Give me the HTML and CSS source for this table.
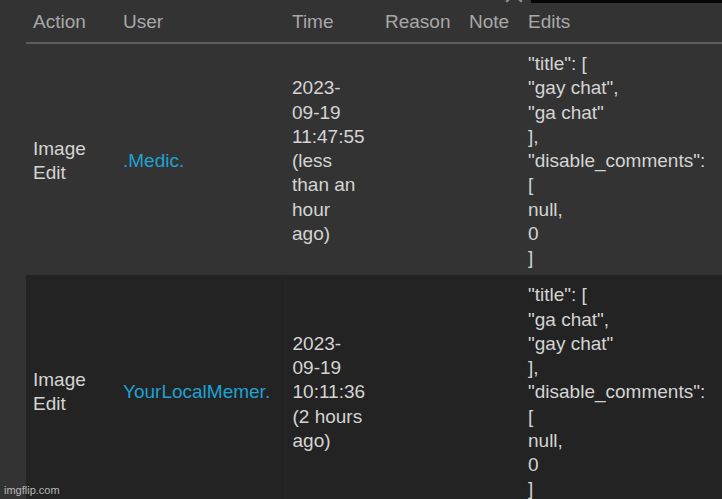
FILE: index.html
```html
<!DOCTYPE html>
<html>
<head>
<meta charset="utf-8">
<link rel="stylesheet" href="styles.css">
</head>
<body>
<div class="page">
  <div class="topbar"></div>
  <svg class="close" width="20" height="20" viewBox="0 0 20 20"><path d="M3 3 L17 17 M17 3 L3 17" stroke="#8a8a8a" stroke-width="2.5" stroke-linecap="round"/></svg>
  <table class="log">
    <colgroup>
      <col class="c-action"><col class="c-user"><col class="c-time"><col class="c-reason"><col class="c-note"><col class="c-edits">
    </colgroup>
    <thead>
      <tr><th>Action</th><th>User</th><th>Time</th><th>Reason</th><th>Note</th><th>Edits</th></tr>
    </thead>
    <tbody>
      <tr class="row-a">
        <td>Image Edit</td>
        <td><a class="user">.Medic.</a></td>
        <td class="time">2023-<br>09-19<br>11:47:55<br>(less<br>than an<br>hour<br>ago)</td>
        <td></td>
        <td></td>
        <td class="edits">"title": [
"gay chat",
"ga chat"
],
"disable_comments":
[
null,
0
]</td>
      </tr>
      <tr class="row-b">
        <td>Image Edit</td>
        <td><a class="user">YourLocalMemer.</a></td>
        <td class="time">2023-<br>09-19<br>10:11:36<br>(2 hours<br>ago)</td>
        <td></td>
        <td></td>
        <td class="edits">"title": [
"ga chat",
"gay chat"
],
"disable_comments":
[
null,
0
]</td>
      </tr>
    </tbody>
  </table>
  <div class="watermark">imgflip.com</div>
</div>
</body>
</html>
```
FILE: styles.css
```css
html, body {
  margin: 0;
  padding: 0;
  background: #333333;
  overflow: hidden;
}
.page {
  position: relative;
  width: 722px;
  height: 499px;
  overflow: hidden;
  padding-left: 26px;
  box-sizing: border-box;
  font-family: "Liberation Sans", Arial, sans-serif;
  font-size: 19px;
}
.topbar {
  position: absolute;
  top: 0;
  left: 531px;
  width: 191px;
  height: 3px;
  background: #060606;
}
.close {
  position: absolute;
  left: 504px;
  top: -16px;
}
.log {
  border-collapse: collapse;
  table-layout: fixed;
  width: 696px;
}
.c-action { width: 90px; }
.c-user { width: 169px; }
.c-time { width: 93px; }
.c-reason { width: 84px; }
.c-note { width: 59px; }
.c-edits { width: 201px; }
th {
  text-align: left;
  font-weight: normal;
  color: #a8a8a8;
  height: 43px;
  padding: 2px 7px 0;
  box-sizing: border-box;
  border-bottom: 2px solid #5c5c5c;
  vertical-align: middle;
  white-space: nowrap;
}
td {
  color: #d4d4d4;
  line-height: 24.25px;
  padding: 8px 7px 5px;
  vertical-align: middle;
}
.row-a td { background: #333333; }
.row-b td { background: #232323; padding-top: 8px; }
.row-b td.time { border-left: 1px solid #262626; }
.user {
  color: #1fa2d3;
}
.edits {
  white-space: pre-line;
}
.watermark {
  position: absolute;
  left: 4px;
  bottom: 3px;
  font-size: 11px;
  color: #cfcfcf;
  opacity: 0.85;
}
```
